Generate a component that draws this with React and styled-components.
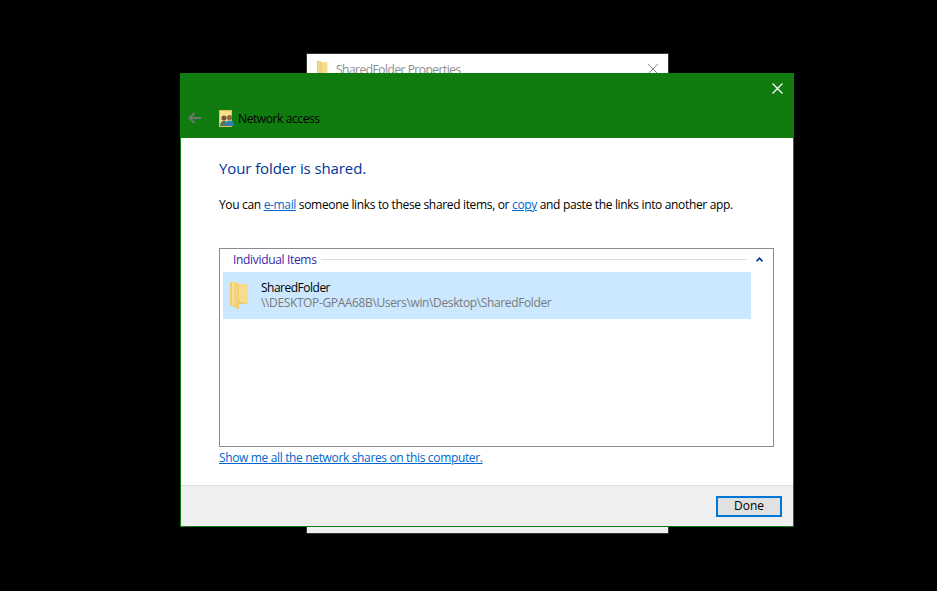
import styled, { createGlobalStyle } from 'styled-components';

const GlobalStyle = createGlobalStyle`
  html, body {
    margin: 0;
    height: 100%;
    background: #000;
  }

  body {
    font-family: 'Open Sans', 'Noto Sans', sans-serif;
    font-size: 12px;
    color: #000;
  }
`;

function FolderIcon({ width = 19 }) {
  return (
    <svg width={width} height={(width * 27) / 19} viewBox="0 0 19 27">
      <path d="M8 2h10v20H8z" fill="#f6dc8e" />
      <path d="M8 19l10 3H8z" fill="#e9c873" />
      <path d="M0 0h6l3 2v25l-3-1-6-3z" fill="#eccb72" />
      <path d="M2 0.500h4l1 1v23l-5-2z" fill="#f8df95" />
      <path d="M4 1h2l2 1v23l-4-1.500z" fill="#f3d27e" />
    </svg>
  );
}

function ShareIcon() {
  return (
    <svg width="15" height="17" viewBox="0 0 15 17">
      <rect x="0.500" y="0.500" width="12" height="16" fill="#fbe08c" stroke="#e8c155" />
      <circle cx="5" cy="8" r="2.600" fill="#6f5a3c" />
      <path d="M1 16c0-3.500 1.500-5 4-5s4 1.500 4 5z" fill="#4d7a55" />
      <circle cx="10.500" cy="7.500" r="2.600" fill="#8a6a48" />
      <path d="M6 16c0-3.500 1.800-5.500 4.500-5.500S15 12.500 15 16z" fill="#2f7fb8" />
    </svg>
  );
}

export default function App() {
  return (
    <>
      <GlobalStyle />
      <Desktop>
        <BackWindow>
          <BackTitleBar>
            <BackTitle>
              <FolderIcon width={11} />
              <span>SharedFolder Properties</span>
            </BackTitle>
            <svg width="12" height="12" viewBox="0 0 12 12">
              <path d="M1 1l10 10M11 1L1 11" stroke="#8a8a8a" strokeWidth="1" />
            </svg>
          </BackTitleBar>
        </BackWindow>

        <Dialog>
          <Header>
            <CloseRow>
              <CloseButton aria-label="Close">
                <svg width="11" height="11" viewBox="0 0 11 11">
                  <path d="M0.500 0.500l10 10M10.500 0.500l-10 10" stroke="#fff" strokeWidth="1.200" />
                </svg>
              </CloseButton>
            </CloseRow>
            <NavRow>
              <BackButton aria-label="Back">
                <svg width="13" height="12" viewBox="0 0 13 12">
                  <path d="M13 6H1.500M6.500 1L1.500 6l5 5" fill="none" stroke="#6f766d" strokeWidth="2" />
                </svg>
              </BackButton>
              <ShareIcon />
              <HeaderTitle>Network access</HeaderTitle>
            </NavRow>
          </Header>

          <Content>
            <Heading>Your folder is shared.</Heading>
            <Intro>
              You can <Link>e-mail</Link> someone links to these shared items, or <Link>copy</Link> and paste the links into another app.
            </Intro>

            <ItemsBox>
              <GroupHeader>
                <GroupLabel>Individual Items</GroupLabel>
                <GroupRule />
                <svg width="7" height="5" viewBox="0 0 7 5">
                  <path d="M3.500 0L7 3.500 6 5 3.500 2.500 1 5 0 3.500z" fill="#0b3f9a" />
                </svg>
              </GroupHeader>
              <ItemRow>
                <FolderIcon />
                <ItemText>
                  <ItemName>SharedFolder</ItemName>
                  <ItemPath>\\DESKTOP-GPAA68B\Users\win\Desktop\SharedFolder</ItemPath>
                </ItemText>
              </ItemRow>
            </ItemsBox>

            <SharesLink>Show me all the network shares on this computer.</SharesLink>
          </Content>

          <Footer>
            <DoneButton>Done</DoneButton>
          </Footer>
        </Dialog>
      </Desktop>
    </>
  );
}

const Desktop = styled.div`
  position: relative;
  width: 937px;
  height: 591px;
  overflow: hidden;
  background: #000;
`;

const BackWindow = styled.div`
  position: absolute;
  left: 306px;
  top: 53px;
  box-sizing: border-box;
  width: 363px;
  height: 481px;
  border: 1px solid #333;
  background: #f0f0f0;
`;

const BackTitleBar = styled.div`
  display: flex;
  justify-content: space-between;
  align-items: center;
  box-sizing: border-box;
  height: 30px;
  padding: 0 9px 0 10px;
  background: #fff;
`;

const BackTitle = styled.div`
  display: flex;
  align-items: center;
  gap: 8px;

  color: #8c8c8c;
  font-size: 12px;
  letter-spacing: -0.5px;
`;

const Dialog = styled.div`
  position: absolute;
  left: 180px;
  top: 73px;
  display: flex;
  flex-direction: column;
  box-sizing: border-box;
  width: 614px;
  height: 454px;
  border: 1px solid #107c10;
  background: #fff;
`;

const Header = styled.div`
  flex: none;
  height: 64px;
  background: #107c10;
`;

const CloseRow = styled.div`
  display: flex;
  justify-content: flex-end;
  height: 28px;
  padding-right: 10px;
`;

const CloseButton = styled.button`
  display: flex;
  align-items: center;
  justify-content: center;
  width: 11px;
  height: 28px;
  padding: 0;
  border: none;
  background: none;
`;

const NavRow = styled.div`
  display: flex;
  align-items: center;
  height: 28px;
  margin-top: 2px;
  padding-left: 7px;
`;

const BackButton = styled.button`
  display: flex;
  width: 31px;
  padding: 0;
  border: none;
  background: none;
`;

const HeaderTitle = styled.span`
  margin-left: 4px;
  color: #000;
  font-size: 12px;
  letter-spacing: -0.4px;
`;

const Content = styled.div`
  flex: 1;
  display: flex;
  flex-direction: column;
  padding: 19px 19px 0 38px;
`;

const Heading = styled.h1`
  margin: 0;
  color: #003399;
  font-size: 15px;
  font-weight: 400;
  line-height: 22px;
  letter-spacing: -0.1px;
`;

const Intro = styled.p`
  margin: 18px 0 0;
  font-size: 12px;
  line-height: 16px;
  letter-spacing: -0.335px;
`;

const Link = styled.a`
  color: #0066cc;
  text-decoration: underline;
`;

const ItemsBox = styled.div`
  box-sizing: border-box;
  height: 199px;
  margin-top: 35px;
  padding: 0 3px;
  border: 1px solid #8a8a8f;
`;

const GroupHeader = styled.div`
  display: flex;
  align-items: center;
  box-sizing: border-box;
  height: 23px;
  padding: 0 7px 2px 10px;
`;

const GroupLabel = styled.span`
  color: #3c1fa8;
  font-size: 12px;
  letter-spacing: -0.33px;
`;

const GroupRule = styled.div`
  flex: 1;
  height: 1px;
  margin: 0 9px 0 4px;
  background: #dcdce6;
`;

const ItemRow = styled.div`
  display: flex;
  align-items: center;
  gap: 12px;
  box-sizing: border-box;
  width: 528px;
  height: 47px;
  padding-left: 7px;
  background: #cce8ff;
`;

const ItemText = styled.div`
  display: flex;
  flex-direction: column;
  padding-bottom: 2px;
  line-height: 15px;
`;

const ItemName = styled.span`
  color: #000;
  letter-spacing: -0.5px;
`;

const ItemPath = styled.span`
  color: #7a7a7a;
  letter-spacing: -0.37px;
`;

const SharesLink = styled(Link)`
  margin-top: 3px;
  font-size: 12px;
  line-height: 16px;
  letter-spacing: -0.35px;
`;

const Footer = styled.div`
  flex: none;
  display: flex;
  justify-content: flex-end;
  align-items: center;
  box-sizing: border-box;
  height: 41px;
  padding: 0 11px 0 0;
  border-top: 1px solid #dfdfdf;
  background: #efefef;
`;

const DoneButton = styled.button`
  box-sizing: border-box;
  width: 66px;
  height: 21px;
  padding: 0 0 1px;
  border: 2px solid #0078d7;
  background: #e1e1e1;

  color: #000;
  font-family: inherit;
  font-size: 12px;
  line-height: 15px;
`;
